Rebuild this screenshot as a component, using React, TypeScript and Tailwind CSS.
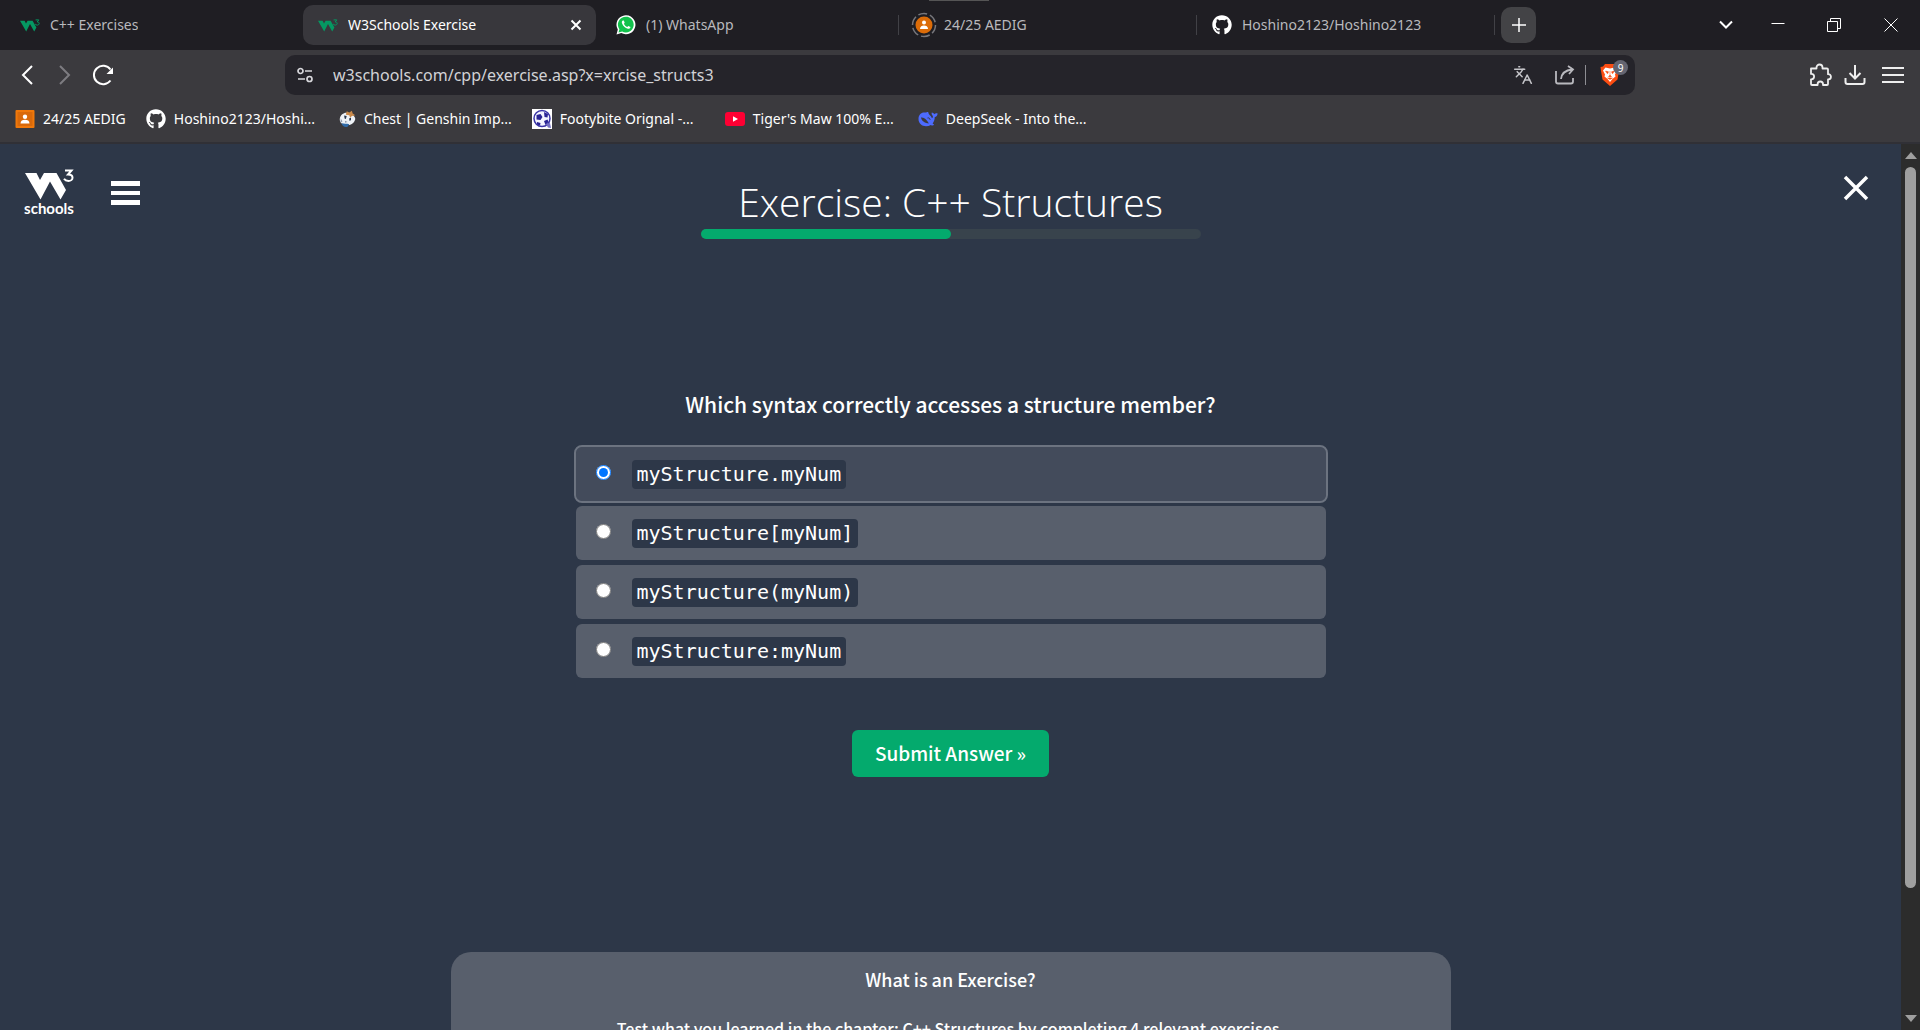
import { useState, type ReactNode } from "react";
import { FaGithub } from "react-icons/fa";
import { Languages } from "lucide-react";

function W3Mark() {
  return (
    <svg viewBox="0 0 50 32" className="h-[13px] w-5" fill="#059862">
      <path d="M0 4h11.500L15 11l4-7h12.500L41 21l-5.500 10L25 12.500 15.500 31z" />
      <path d="M39 2h8l-4 5c3 0 5 1.500 5 4s-3 4-5 4-4-1-5-2.500" fill="none" stroke="#059862" strokeWidth="2.500" />
    </svg>
  );
}

function WhatsAppIcon() {
  return (
    <svg viewBox="0 0 20 20" className="size-5">
      <path d="M.5 19.500l1.300-4.900A9.500 9.500 0 1 1 5.300 18z" fill="#fff" />
      <path d="M2.500 17.500l.9-3.300A7.900 7.900 0 1 1 6.200 16.600z" fill="#12c24c" />
      <path d="M6.800 5.500c-.8.5-1.200 1.600-.8 2.700 1 2.700 3.200 4.800 5.900 5.600 1.200.3 2.500-.4 2.600-1.700l-2.200-1.200-1 1.100c-1.600-.6-2.700-1.700-3.400-3.200l.8-1-.9-2.200z" fill="#fff" />
    </svg>
  );
}

function ClassroomPerson({ className }: { className: string }) {
  return (
    <svg viewBox="0 0 20 20" className={className}>
      <rect x=".5" y="1" width="19" height="18" rx="1" fill="#f0780a" />
      <rect x="2.500" y="3" width="15" height="14" fill="#d9690a" />
      <circle cx="10" cy="7.800" r="2.200" fill="#fff" />
      <path d="M5.500 14.500c0-2.800 2-3.800 4.500-3.800s4.500 1 4.500 3.800z" fill="#fff" />
    </svg>
  );
}

function ClassroomLoading() {
  return (
    <svg viewBox="0 0 26 26" className="size-[26px]">
      <circle cx="13" cy="13" r="11.500" fill="none" stroke="#77777c" strokeWidth="1.500" strokeDasharray="9 3" />
      <circle cx="13" cy="13" r="8.500" fill="#dc6c08" />
      <circle cx="13" cy="10.500" r="2" fill="#fff" />
      <path d="M9 17c0-2.500 1.800-3.500 4-3.500s4 1 4 3.500z" fill="#fff" />
    </svg>
  );
}

function PaimonIcon() {
  return (
    <svg viewBox="0 0 20 20" className="size-5">
      <path d="M1 9c1-4 5-7 9-6 5 0 9 4 9 7-1 4-4 7-8 7-6 1-11-3-10-8z" fill="#eef2f7" />
      <path d="M9 1l3 1.500L15 .5l1 3 3 2-4 1-2 2-1-3-4-.5z" fill="#c98a4b" />
      <path d="M3 15c3 1 6 0 9 1l-2 3c-3 1-6 0-7-4z" fill="#2f6aa8" />
      <path d="M6 6l3 .5-1 3.500-1.500-.5z" fill="#27364d" />
      <path d="M12 9l2-.5v3l-2 .5z" fill="#27364d" />
      <path d="M2 9l2 4-2 1zM7 12l3 1.500-3 1z" fill="#8b97aa" />
    </svg>
  );
}

function FootballIcon() {
  return (
    <svg viewBox="0 0 20 20" className="size-5">
      <rect width="20" height="20" fill="#fff" />
      <circle cx="10" cy="9.500" r="8" fill="#f4f4ff" stroke="#3a34a8" strokeWidth="1.500" />
      <path d="M4.500 6l4-1 2 3-2 3-4-.5zM12 3l4 2-.5 3.500-3-.5zM12 12l3.500-1.500 1 2.500-3 3zM5 13l3.500 1-.5 2.500-3-1z" fill="#2a2494" />
      <path d="M14 15l4-1 1 5-3-.5z" fill="#7470c4" />
    </svg>
  );
}

function YouTubeIcon() {
  return (
    <svg viewBox="0 0 20 20" className="size-5">
      <rect y="3" width="20" height="14" rx="3" fill="#ff0033" />
      <path d="M8 7.200l5 2.800-5 2.800z" fill="#fff" />
    </svg>
  );
}

function WhaleIcon() {
  return (
    <svg viewBox="0 0 20 20" className="size-5" fill="#4d6bfe">
      <path d="M.5 10C.5 5.500 3.500 3 7 3.500c1.500.2 2-.8 3-.5.8.5.3 1.700 1.200 2.500C12.500 6.700 13.500 8 14 9.300c1-.5.9-1.500.8-2.500-1-.7-1.500-2-1-3.300 1 .2 1.900.8 2.400 1.800.8-1 1.900-1.200 3.300-1.100.2 2-.9 3.500-2.700 3.900-.1 3-1 4.900-2.200 6.300l1.600 1.300c-1 .9-2.300.9-3.300.2C7.500 19 .5 16.500.5 10z" />
      <path d="M3 8.500c3-.8 6.500 2.800 7.800 6-3.500-.2-7.300-2.300-7.800-6z" fill="#3b3a3e" />
      <path d="M9.500 9c1.200-.5 2.500.4 2.600 1.800" fill="none" stroke="#3b3a3e" strokeWidth="1" />
    </svg>
  );
}

type TabProps = { icon: ReactNode; title: string; active?: boolean; separator?: boolean };

function Tab({ icon, title, active, separator }: TabProps) {
  return (
    <div className="flex min-w-0 max-w-[298px] flex-1 items-center">
      <div className={`flex h-10 min-w-0 flex-1 items-center rounded-[10px] ${active ? "bg-[#38373c] text-white" : "text-[#b9b9bd]"}`}>
        <button type="button" className="flex min-w-0 flex-1 items-center text-left">
          <span className="ml-2 flex w-[34px] shrink-0 justify-center">{icon}</span>
          <span className="ml-[3px] truncate">{title}</span>
        </button>
        {active && (
          <button type="button" aria-label="Close tab" className="mr-[10px] p-1">
            <svg viewBox="0 0 12 12" className="size-3" stroke="#fff" strokeWidth="2">
              <path d="M1.500 1.500l9 9M10.500 1.500l-9 9" />
            </svg>
          </button>
        )}
      </div>
      <span className={`ml-1 h-5 w-px ${separator ? "bg-[#414146]" : "bg-transparent"}`} />
    </div>
  );
}

const bookmarks: { label: string; icon: ReactNode }[] = [
  { label: "24/25 AEDIG", icon: <ClassroomPerson className="size-5" /> },
  { label: "Hoshino2123/Hoshi...", icon: <FaGithub className="size-5" /> },
  { label: "Chest | Genshin Imp...", icon: <PaimonIcon /> },
  { label: "Footybite Orignal -...", icon: <FootballIcon /> },
  { label: "Tiger's Maw 100% E...", icon: <YouTubeIcon /> },
  { label: "DeepSeek - Into the...", icon: <WhaleIcon /> },
];

function TabStrip() {
  return (
    <div className="relative flex h-[50px] items-center bg-[#1f1e23] pl-[5px] text-sm">
      <span className="absolute top-0 left-[929px] h-px w-[60px] bg-[#555]" />
      <Tab icon={<W3Mark />} title="C++ Exercises" />
      <Tab icon={<W3Mark />} title="W3Schools Exercise" active />
      <Tab icon={<WhatsAppIcon />} title="(1) WhatsApp" separator />
      <Tab icon={<ClassroomLoading />} title="24/25 AEDIG" separator />
      <Tab icon={<FaGithub className="size-5 text-white" />} title="Hoshino2123/Hoshino2123" separator />
      <button type="button" aria-label="New tab" className="ml-[6px] flex h-9 w-[35px] items-center justify-center rounded-[10px] bg-[#434346]">
        <svg viewBox="0 0 14 14" className="size-3.5" stroke="#fff" strokeWidth="1.500">
          <path d="M7 0v14M0 7h14" />
        </svg>
      </button>
      <div className="ml-auto flex items-center">
        <button type="button" aria-label="Search tabs" className="flex w-12 justify-center">
          <svg viewBox="0 0 14 10" className="h-2.5 w-3.5" fill="none" stroke="#fff" strokeWidth="2">
            <path d="M1 1.500l6 6 6-6" />
          </svg>
        </button>
        <button type="button" aria-label="Minimize" className="flex w-[56px] justify-center">
          <svg viewBox="0 0 14 14" className="size-3.5" stroke="#fff">
            <path d="M.5 5.500h13" />
          </svg>
        </button>
        <button type="button" aria-label="Restore" className="flex w-[56px] justify-center">
          <svg viewBox="0 0 14 14" className="size-3.5" fill="none" stroke="#fff">
            <path d="M.5 3.500h10v10H.5zM3.500 3V.5h10v10H11" />
          </svg>
        </button>
        <button type="button" aria-label="Close window" className="flex w-[58px] justify-center">
          <svg viewBox="0 0 14 14" className="size-3.5" stroke="#fff">
            <path d="M.5.5l13 13M13.500.5l-13 13" />
          </svg>
        </button>
      </div>
    </div>
  );
}

function Toolbar() {
  const [url, setUrl] = useState("w3schools.com/cpp/exercise.asp?x=xrcise_structs3");
  return (
    <div className="flex h-[50px] items-center">
      <div className="flex w-[285px] shrink-0 items-center pl-5">
        <button type="button" aria-label="Back">
          <svg viewBox="0 0 14 20" className="h-5 w-3.5" fill="none" stroke="#fff" strokeWidth="2">
            <path d="M12 1l-9 9 9 9" />
          </svg>
        </button>
        <button type="button" aria-label="Forward" className="ml-6">
          <svg viewBox="0 0 14 20" className="h-5 w-3.5" fill="none" stroke="#7d7c81" strokeWidth="2">
            <path d="M2 1l9 9-9 9" />
          </svg>
        </button>
        <button type="button" aria-label="Reload" className="ml-5">
          <svg viewBox="0 0 22 22" className="size-[22px]" fill="none" stroke="#fff" strokeWidth="2">
            <path d="M18.500 16.500A9.200 9.200 0 1 1 18.500 5.500" />
            <path d="M21 3.500V10h-6.500z" fill="#fff" stroke="none" />
          </svg>
        </button>
      </div>
      <div className="flex h-10 w-[1350px] min-w-0 items-center rounded-[10px] bg-[#25242a] pr-2 pl-3">
        <button type="button" aria-label="Site information">
          <svg viewBox="0 0 16 16" className="size-4" fill="none" stroke="#d8d8dc" strokeWidth="1.700">
            <circle cx="3.500" cy="4" r="2.500" />
            <circle cx="12.500" cy="12" r="2.500" />
            <path d="M8 4h7M1 12h7" />
          </svg>
        </button>
        <input
          aria-label="Address"
          value={url}
          onChange={(e) => setUrl(e.target.value)}
          className="ml-5 min-w-0 flex-1 bg-transparent text-base text-[#d2d2d6] outline-none"
        />
        <button type="button" aria-label="Translate" className="text-[#c5c5c9]">
          <Languages className="size-5" strokeWidth={1.8} />
        </button>
        <button type="button" aria-label="Share" className="ml-[22px]">
          <svg viewBox="0 0 20 20" className="size-5" fill="none" stroke="#b9b9be" strokeWidth="1.800">
            <path d="M1 6v10.500q0 2 2 2h13q2 0 2-2V13" />
            <path d="M6 14q1-8.500 11-9.500M13 1l5 3.500-4 4.500" />
          </svg>
        </button>
        <span className="ml-[10px] h-5 w-px bg-[#8e8e93]" />
        <button type="button" aria-label="Brave Shields, 9 blocked" className="relative mr-[6px] ml-[13px] p-px">
          <svg viewBox="0 0 20 22" className="h-[22px] w-5">
            <path d="M5 0h10l2 2.500 2.500.5-.5 4-1.500 8.500L10 22l-7.500-6.500L1 7 .5 3 3 2.500z" fill="#fb4d12" />
            <path d="M5.500 3.500L10 4.500l4.500-1L17 6.500l-2 4 .5 2-3 2.500L10 18l-2.500-3-3-2.500.5-2-2-4z" fill="#fff" />
            <path d="M5.500 7l3 .8-1 2zM14.500 7l-3 .8 1 2zM10 7v4l-1.500 1.500L10 13l1.500-.5L10 11M7.500 14h5L10 15.500z" fill="#fb4d12" stroke="#fb4d12" strokeWidth=".5" />
          </svg>
          <span className="absolute -top-[3px] -right-[7px] flex size-[15px] items-center justify-center rounded-full bg-[#646571] text-[10px] leading-none text-white">9</span>
        </button>
      </div>
      <div className="ml-auto flex items-center gap-3 pr-4">
        <button type="button" aria-label="Extensions">
          <svg viewBox="0 0 24 24" className="size-6" fill="none" stroke="#eee" strokeWidth="1.800" strokeLinejoin="round">
            <path d="M3 5.500h5.500V4.500a3 3 0 0 1 6 0v1H19q1 0 1 1v4.700h.3a2.600 2.600 0 0 1 0 5.300H20V21q0 1-1 1h-4v-.8a2.700 2.700 0 0 0-5.400 0V22H4q-1 0-1-1v-4.700h.4a2.600 2.600 0 0 0 0-5.400H3z" />
          </svg>
        </button>
        <button type="button" aria-label="Downloads">
          <svg viewBox="0 0 22 22" className="size-[22px]" fill="none" stroke="#eee" strokeWidth="2">
            <path d="M11 1v13M5.500 9l5.500 5.500L16.500 9M1.500 14v4q0 2 2 2h15q2 0 2-2v-4" />
          </svg>
        </button>
        <button type="button" aria-label="Menu" className="ml-1">
          <svg viewBox="0 0 22 18" className="h-[18px] w-[22px]" stroke="#eee" strokeWidth="2">
            <path d="M0 2h22M0 9h22M0 16h22" />
          </svg>
        </button>
      </div>
    </div>
  );
}

const answers = ["myStructure.myNum", "myStructure[myNum]", "myStructure(myNum)", "myStructure:myNum"];

function Quiz() {
  const [selected, setSelected] = useState(0);
  return (
    <form className="mx-auto mt-[150px] flex w-full max-w-[750px] flex-col items-center" onSubmit={(e) => e.preventDefault()}>
      <h2 className="text-[21px] leading-[30px] font-medium">Which syntax correctly accesses a structure member?</h2>
      <div className="mt-7 flex w-full flex-col gap-[5px]">
        {answers.map((answer, i) => (
          <label
            key={answer}
            className={`flex h-[54px] items-center rounded-md pl-5 ${
              i === selected ? "bg-[#434b5b] outline-2 outline-[#6c7380]" : "bg-[#585f6c]"
            }`}
          >
            <input
              type="radio"
              name="answer"
              checked={i === selected}
              onChange={() => setSelected(i)}
              className="mb-1 size-[15px] accent-[#0075ff]"
            />
            <code className="ml-[21px] rounded-sm bg-[#2d3748] px-[5px] font-['DejaVu_Sans_Mono',monospace] text-[20px] leading-[29px]">
              {answer}
            </code>
          </label>
        ))}
      </div>
      <button type="submit" className="mt-[52px] rounded-md bg-[#04aa6d] px-[23px] pb-0.5 text-[19px] leading-[45px] font-medium">
        Submit Answer »
      </button>
    </form>
  );
}

export default function App() {
  return (
    <div className="flex h-screen flex-col overflow-hidden font-['Noto_Sans',sans-serif] text-white">
      <header className="shrink-0 border-b-2 border-[#303036] bg-[#3b3a3e]">
        <TabStrip />
        <Toolbar />
        <nav aria-label="Bookmarks" className="flex h-[42px] items-center gap-5 pb-1 pl-[15px] text-sm">
          {bookmarks.map((b) => (
            <a key={b.label} href="#" className="flex items-center gap-2 whitespace-nowrap not-first:w-[173px]">
              {b.icon}
              {b.label}
            </a>
          ))}
        </nav>
      </header>
      <div className="flex min-h-0 flex-1">
        <main className="min-w-0 flex-1 overflow-hidden bg-[#2d3748] font-['Noto_Sans_CJK_SC',sans-serif]">
          <div className="grid grid-cols-[1fr_auto_1fr]">
            <div className="flex items-start pt-[25px] pl-6">
              <a href="#" aria-label="W3Schools home" className="w-[50px]">
                <svg viewBox="0 0 50 32" className="h-8 w-[50px]" fill="#fff">
                  <path d="M1 4h11.500L16 11l4-7h12.500L42 21l-5.500 9.500L26 12.500 16.500 30.500z" />
                  <path d="M41 1.500h6.500l-3.500 4c2.500 0 4.500 1.300 4.500 3.200s-1.800 3.300-4 3.300-3.600-.8-4.500-2.200" fill="none" stroke="#fff" strokeWidth="2" />
                </svg>
                <span className="-mt-px block text-center font-['Lato',sans-serif] text-[15px] leading-4 font-bold">schools</span>
              </a>
              <button type="button" aria-label="Open menu" className="mt-3 ml-[37px] flex flex-col gap-[5px]">
                <span className="h-[5px] w-[29px] bg-white" />
                <span className="h-[4px] w-[29px] bg-white" />
                <span className="h-[5px] w-[29px] bg-white" />
              </button>
            </div>
            <div className="w-[500px] pt-[30px]">
              <h1 className="text-center font-['Open_Sans',sans-serif] text-[39px] leading-[55px] font-light">Exercise: C++ Structures</h1>
              <div role="progressbar" aria-label="Progress" aria-valuenow={50} aria-valuemin={0} aria-valuemax={100} className="h-2.5 rounded-full bg-[#38434c]">
                <div className="h-full w-1/2 rounded-full bg-[#04aa6d]" />
              </div>
            </div>
            <div className="flex items-start justify-end pt-[31px] pr-8">
              <button type="button" aria-label="Close exercise">
                <svg viewBox="0 0 26 26" className="size-[26px]" stroke="#fff" strokeWidth="3.500">
                  <path d="M2 2l22 22M24 2L2 24" />
                </svg>
              </button>
            </div>
          </div>
          <Quiz />
          <section className="mx-auto mt-[175px] h-[300px] max-w-[1000px] rounded-[20px] bg-[#585f6c] pt-4 text-center">
            <h3 className="text-[18px] leading-[22px] font-medium">What is an Exercise?</h3>
            <p className="mt-[26px] text-[16px] leading-6 font-medium">
              Test what you learned in the chapter: C++ Structures by completing 4 relevant exercises.
            </p>
          </section>
        </main>
        <div aria-hidden="true" className="flex w-[19px] shrink-0 flex-col items-center bg-[#2c2c2c] py-2">
          <svg viewBox="0 0 12 7" className="h-[7px] w-3" fill="#9f9f9f">
            <path d="M6 0l6 7H0z" />
          </svg>
          <div className="mt-2 w-full flex-1">
            <div className="mx-auto h-[85%] w-[11px] rounded-full bg-[#9f9f9f]" />
          </div>
          <svg viewBox="0 0 12 7" className="h-[7px] w-3" fill="#9f9f9f">
            <path d="M6 7L0 0h12z" />
          </svg>
        </div>
      </div>
    </div>
  );
}
